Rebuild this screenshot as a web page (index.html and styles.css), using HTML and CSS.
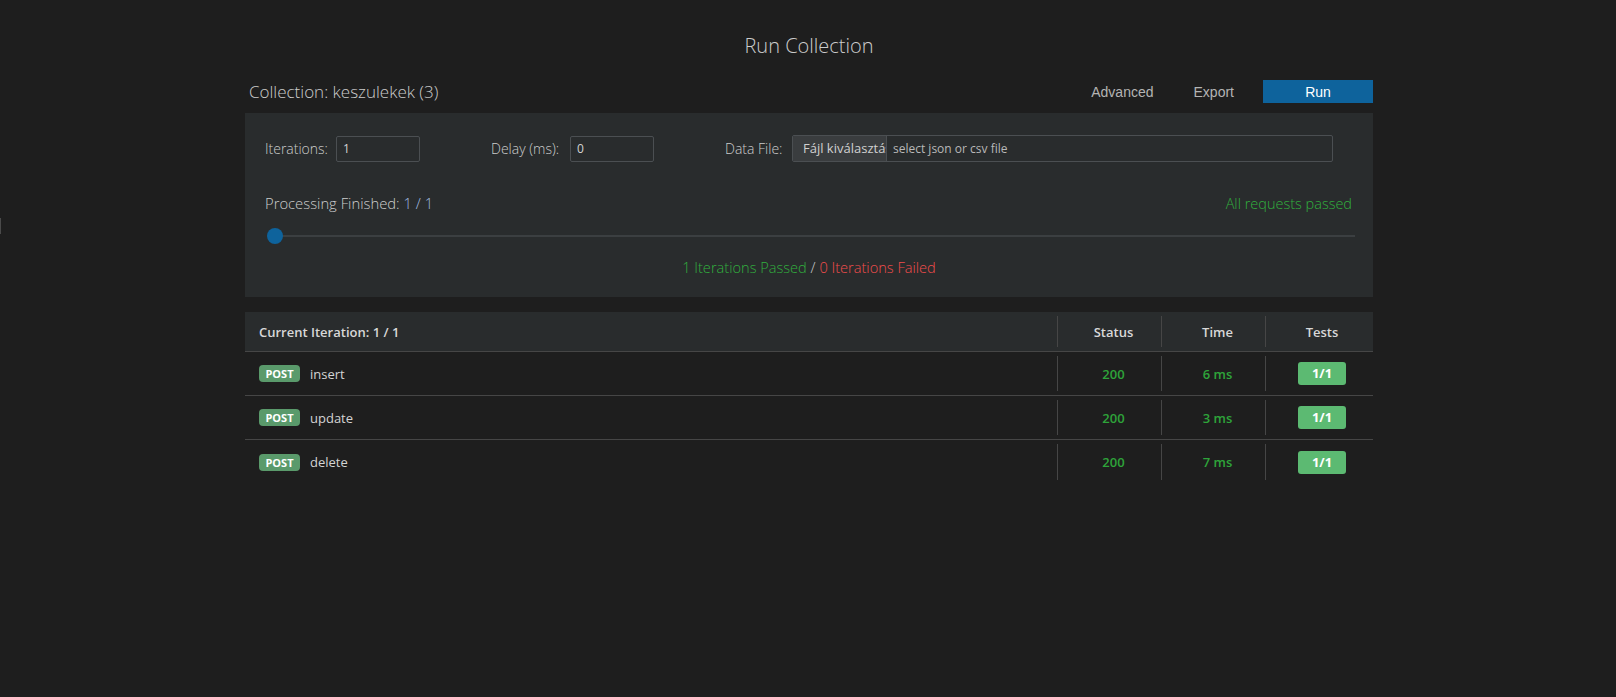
FILE: index.html
```html
<!DOCTYPE html>
<html>
<head>
<meta charset="utf-8">
<link rel="stylesheet" href="styles.css">
</head>
<body>
<div class="sash"></div>
<div class="page">
  <h1 class="title">Run Collection</h1>
  <div class="head">
    <div class="coll">Collection: keszulekek (3)</div>
    <div class="actions">
      <button class="link">Advanced</button>
      <button class="link">Export</button>
      <button class="run">Run</button>
    </div>
  </div>
  <div class="panel">
    <div class="opts">
      <label class="lbl">Iterations:</label>
      <div class="inp">1</div>
      <span></span>
      <label class="lbl">Delay (ms):</label>
      <div class="inp">0</div>
      <span></span>
      <label class="lbl">Data File:</label>
      <div class="file"><span class="fbtn">Fájl kiválasztása</span><span class="fph">select json or csv file</span></div>
    </div>
    <div class="prog">
      <div class="proc">Processing Finished: <span class="num">1 / 1</span></div>
      <div class="ok">All requests passed</div>
    </div>
    <div class="slider"><div class="track"></div><div class="thumb"></div></div>
    <div class="summary"><span class="ok">1 Iterations Passed</span> / <span class="bad">0 Iterations Failed</span></div>
  </div>
  <div class="table">
    <div class="row hdr">
      <div class="c-name">Current Iteration: 1 / 1</div>
      <div class="c"><div class="sep">Status</div></div>
      <div class="c"><div class="sep">Time</div></div>
      <div class="c c-last"><div class="sep">Tests</div></div>
    </div>
    <div class="row">
      <div class="c-name"><span class="method">POST</span><span class="rname">insert</span></div>
      <div class="c"><div class="sep green">200</div></div>
      <div class="c"><div class="sep green">6 ms</div></div>
      <div class="c c-last"><div class="sep"><span class="tests">1/1</span></div></div>
    </div>
    <div class="row">
      <div class="c-name"><span class="method">POST</span><span class="rname">update</span></div>
      <div class="c"><div class="sep green">200</div></div>
      <div class="c"><div class="sep green">3 ms</div></div>
      <div class="c c-last"><div class="sep"><span class="tests">1/1</span></div></div>
    </div>
    <div class="row last">
      <div class="c-name"><span class="method">POST</span><span class="rname">delete</span></div>
      <div class="c"><div class="sep green">200</div></div>
      <div class="c"><div class="sep green">7 ms</div></div>
      <div class="c c-last"><div class="sep"><span class="tests">1/1</span></div></div>
    </div>
  </div>
</div>
</body>
</html>
```

FILE: styles.css
```css
html, body {
  margin: 0;
  padding: 0;
  background: #1e1e1e;
  height: 100%;
}
body {
  font-family: "Open Sans", "Noto Sans", sans-serif;
  color: #cccccc;
  position: relative;
}
.sash {
  position: absolute;
  left: 0;
  top: 218px;
  width: 1px;
  height: 16px;
  background: #4a4a4a;
}
.page {
  width: 1128px;
  margin-left: calc(50% - 563px);
  margin-right: auto;
}
.title {
  margin: 0;
  padding-top: 33px;
  height: 47px;
  box-sizing: border-box;
  font-size: 20px;
  font-weight: 300;
  text-align: center;
  color: #cccccc;
  line-height: 26px;
}
.head {
  display: flex;
  justify-content: space-between;
  align-items: center;
  height: 23px;
  margin-top: 33px;
}
.coll {
  padding-left: 4px;
  font-size: 17px;
  font-weight: 300;
  color: #cccccc;
}
.actions {
  display: flex;
  align-items: center;
  height: 23px;
}
.actions button {
  font-family: "Liberation Sans", Arial, sans-serif;
  font-size: 14px;
  border: 0;
  height: 23px;
  padding: 0;
  cursor: pointer;
}
.link {
  background: transparent;
  color: #b4b4b4;
  padding: 0 20px !important;
}
.run {
  background: #0e639c;
  color: #ffffff;
  width: 110px;
  margin-left: 9px;
}
.panel {
  margin-top: 10px;
  height: 184px;
  box-sizing: border-box;
  background: #292c2d;
  padding: 22px 20px 0 20px;
}
.opts {
  display: grid;
  grid-template-columns: 71px 84px 71px 79px 84px 71px 67px 541px;
  align-items: center;
  height: 26px;
}
.lbl {
  font-size: 14px;
  font-weight: 300;
  color: #cccccc;
}
.inp {
  height: 26px;
  box-sizing: border-box;
  border: 1px solid #4b4f52;
  border-radius: 2px;
  background: #292c2d;
  font-size: 12px;
  line-height: 24px;
  padding-left: 6px;
  color: #d4d4d4;
}
.file {
  display: flex;
  height: 27px;
  box-sizing: border-box;
  border: 1px solid #4b4f52;
  border-radius: 2px;
  overflow: hidden;
}
.fbtn {
  width: 94px;
  flex: none;
  overflow: hidden;
  white-space: nowrap;
  background: #3a3d3f;
  border-right: 1px solid #4b4f52;
  padding-left: 10px;
  box-sizing: border-box;
  font-size: 13px;
  font-weight: 400;
  line-height: 25px;
  color: #d0d0d0;
}
.fph {
  padding-left: 6px;
  font-size: 12px;
  line-height: 25px;
  color: #b8b8b8;
}
.prog {
  display: flex;
  justify-content: space-between;
  align-items: center;
  margin-top: 32px;
  height: 20px;
  padding-right: 1px;
}
.proc {
  font-size: 14.8px;
  font-weight: 300;
  color: #cccccc;
}
.num {
  color: #a2bfe2;
}
.ok {
  color: #31b03e;
  font-size: 14.5px;
  font-weight: 300;
}
.bad {
  color: #f14c4c;
}
.slider {
  position: relative;
  height: 16px;
  margin-top: 15px;
  margin-left: 2px;
  margin-right: -2px;
}
.track {
  position: absolute;
  left: 8px;
  right: 0;
  top: 7px;
  height: 2px;
  background: #3b3f41;
}
.thumb {
  position: absolute;
  left: 0;
  top: 0;
  width: 16px;
  height: 16px;
  border-radius: 50%;
  background: #0e639c;
}
.summary {
  text-align: center;
  margin-top: 13px;
  font-size: 14.6px;
  font-weight: 300;
  color: #cccccc;
}
.summary .ok {
  font-size: 14.6px;
}
.table {
  margin-top: 15px;
}
.row {
  display: flex;
  height: 44px;
  box-sizing: border-box;
  border-bottom: 1px solid #464646;
  font-size: 13px;
}
.row.last {
  border-bottom: 0;
}
.row.hdr {
  height: 40px;
  background: #292c2d;
  font-weight: 600;
  color: #d8d8d8;
}
.c-name {
  width: 812px;
  display: flex;
  align-items: center;
  padding-left: 14px;
  box-sizing: border-box;
}
.c {
  width: 104px;
  padding: 4px 0;
  box-sizing: border-box;
  display: flex;
}
.c-last {
  width: 108px;
}
.sep {
  flex: 1;
  border-left: 1px solid #464646;
  display: flex;
  align-items: center;
  justify-content: center;
  padding-left: 8px;
}
.c-last .sep {
  padding-left: 5px;
}
.green {
  color: #2ea43a;
  font-weight: 600;
}
.method {
  display: inline-block;
  width: 41px;
  height: 17px;
  border-radius: 4px;
  background: #5a9a6b;
  color: #ffffff;
  font-size: 11px;
  font-weight: 700;
  line-height: 17px;
  text-align: center;
}
.rname {
  margin-left: 10px;
  color: #d4d4d4;
}
.tests {
  display: inline-block;
  width: 48px;
  height: 23px;
  border-radius: 3px;
  background: #5cba72;
  color: #ffffff;
  font-weight: 700;
  font-size: 13px;
  line-height: 23px;
  text-align: center;
}
```
